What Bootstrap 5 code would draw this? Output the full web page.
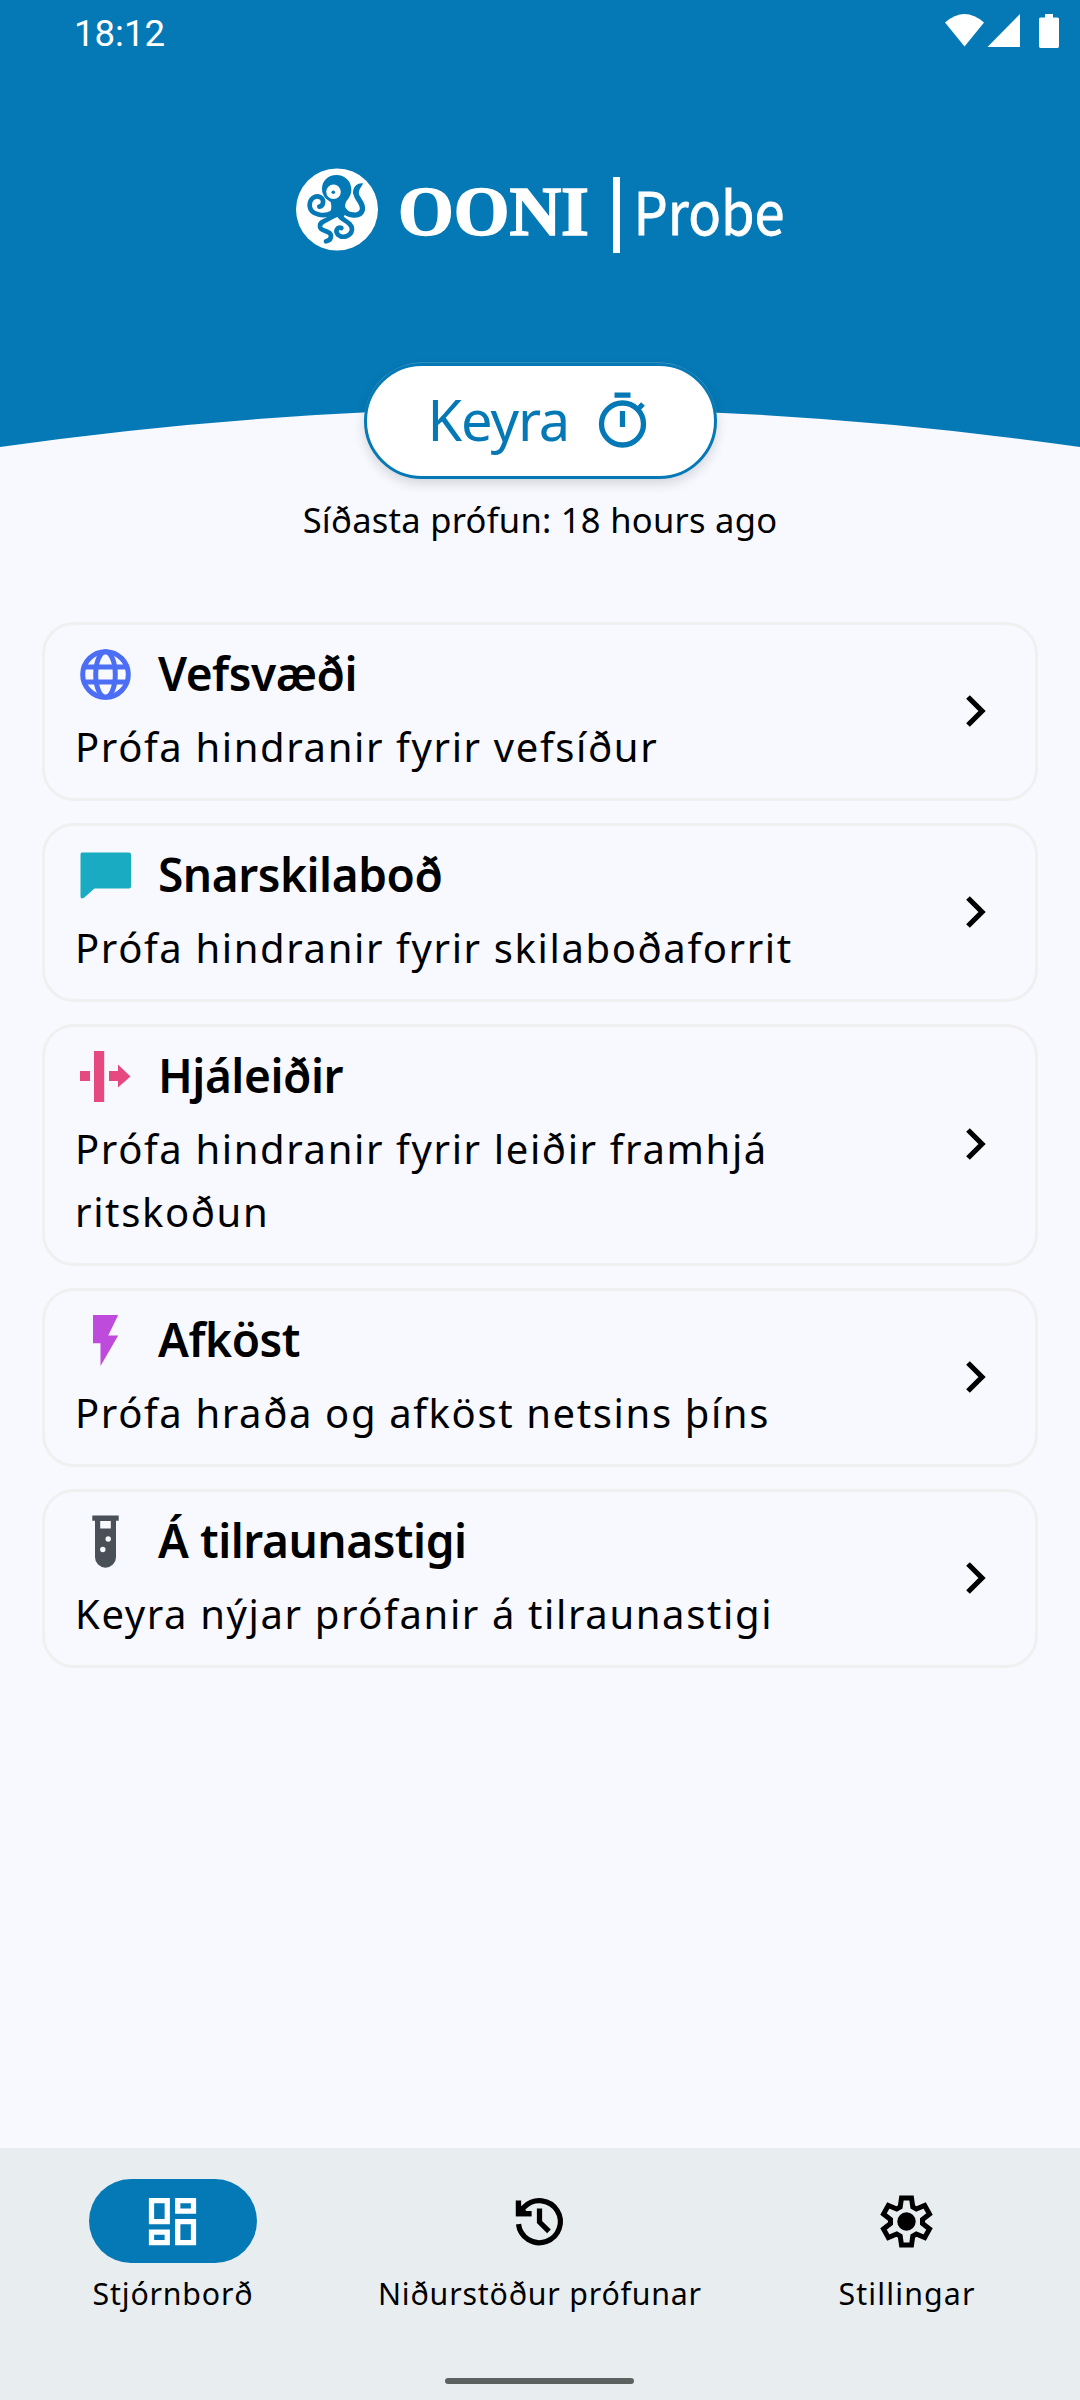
<!DOCTYPE html>
<html lang="is">
<head>
<meta charset="utf-8">
<meta name="viewport" content="width=device-width, initial-scale=1">
<title>OONI Probe</title>
<link href="https://cdn.jsdelivr.net/npm/bootstrap@5.3.0/dist/css/bootstrap.min.css" rel="stylesheet">
<style>
  :root { --ooni: #0579b6; --surface: #f8f9ff; }
  body { background: var(--surface); color: #000; font-family: "Noto Sans", "Open Sans", sans-serif; font-kerning: normal; }
  .screen { width: 1080px; height: 2400px; overflow: hidden; }
  .hero { height: 447px; position: relative; flex: none; }
  .hero-shape { position: absolute; inset: 0; z-index: 0; }
  .status-strip { height: 63px; padding: 4px 21px 0 74px; position: relative; }
  .status-icons { margin-top: 6px; }
  .clock { font: 36.6px/60px Roboto, sans-serif; color: #fff; }
  .brand-mark { margin-top: 86px; position: relative; }
  .run-wrap { margin-top: -84px; position: relative; }
  .run-btn { width: 353px; height: 116px; border: 3px solid var(--ooni); background: #fff; color: var(--ooni); border-radius: 58px; padding: 0 66px 3px 61px; font-size: 56px; line-height: 107px; letter-spacing: -1.1px; box-shadow: 0 -.5px 0 rgba(255,255,255,.35), 0 5px 12px rgba(0,0,0,.14); }
  .last-run { font-size: 34.5px; line-height: 50px; letter-spacing: .28px; margin-top: 16px; }
  .test-list { padding: 0 42px; gap: 22px; margin-top: 77px; }
  .test-card { --bs-card-bg: transparent; --bs-card-border-width: 3px; --bs-card-border-color: #f0f0f0; --bs-card-border-radius: 32px; padding: 18px 43px 20px 30px; }
  .test-title { font-size: 46px; font-weight: 600; line-height: 60px; letter-spacing: -.45px; margin: 0; padding-bottom: 3px; height: 63px; color: #000; }
  .test-head { gap: 21px; }
  .test-desc { font-size: 40px; line-height: 63px; letter-spacing: 1.62px; margin: 9px 0 0; color: #000; white-space: nowrap; }
  .bottom-bar { height: 252px; background: #e8eef0; padding-top: 31px; }
  .tab-row { gap: 21px; }
  .tab-item { color: #000; text-decoration: none; flex: 1 1 0; }
  .tab-pill { width: 168px; height: 84px; border-radius: 42px; padding-right: 2px; }
  .tab-pill.active { background: var(--ooni); color: #fff; }
  .tab-label { font-size: 30.3px; line-height: 42px; letter-spacing: .8px; margin-top: 10px; white-space: nowrap; }
  .tab-label.roomy { letter-spacing: 1.15px; }
  .home-bar { width: 189px; height: 6px; border-radius: 3px; background: #5d6160; margin: 63px 1px 0 0; }
</style>
<script src="https://cdn.jsdelivr.net/npm/bootstrap@5.3.0/dist/js/bootstrap.bundle.min.js"></script>
</head>
<body>
<div class="screen d-flex flex-column">
  <header class="hero">
    <svg class="hero-shape" width="1080" height="447" viewBox="0 0 1080 447"><path fill="#0579b6" d="M0 0H1080V447Q540 370 0 447Z"/></svg>
    <div class="status-strip d-flex justify-content-between align-items-start">
      <span class="clock">18:12</span>
      <svg class="status-icons" width="116" height="40" viewBox="943 10 116 40" fill="#fff">
        <path d="M945 22.500Q964.500 5.500 984 22.500L964.500 46.500Z"/>
        <path d="M1020 14V47H987.500Z"/>
        <path d="M1045 14h8v3.500h4.500q1.500 0 1.500 1.500v27q0 2-1.500 2h-17q-1.500 0-1.500-2v-27q0-1.500 1.500-1.500h4.500Z"/>
      </svg>
    </div>
    <div class="brand-mark d-flex justify-content-center">
      <svg width="530" height="110" viewBox="275 149 530 110">
        <circle cx="337" cy="209.500" r="41" fill="#fff"/>
        <g transform="translate(280 150) scale(.33333)" fill="none" stroke="#0579b6" stroke-width="14" stroke-linecap="round" stroke-linejoin="round">
          <path fill="#0579b6" stroke="none" d="M169 75C195 75 214 94 214 119C214 136 205 145 199 154C194 164 194 174 200 186L186 208L172 201L156 208L148 190C154 182 156 170 152 156C146 152 126 142 126 117C126 92 144 75 169 75Z"/>
          <path d="M156 188C134 202 92 196 89 168C88 146 106 134 122 142C134 150 130 168 118 170"/>
          <path stroke-width="16" d="M192 180C200 196 240 204 247 180C252 158 228 148 228 128"/>
          <path stroke="none" fill="#0579b6" d="M219 132C218 112 230 98 249 100C246 110 238 114 236 130Z"/>
          <path d="M162 196C148 212 118 210 120 230C122 246 150 240 153 256C154 268 146 272 138 274"/>
          <path d="M178 196C186 212 216 216 216 238C214 260 188 266 174 254C164 242 172 230 184 234"/>
        </g>
        <circle cx="333.500" cy="191.800" r="7.300" fill="#fff"/><circle cx="333.300" cy="192.200" r="1.800" fill="#0579b6"/>
        <text x="398" y="234.500" font-family="'Liberation Serif',serif" font-weight="700" font-size="69" fill="#fff" stroke="#fff" stroke-width="1.600" textLength="191" lengthAdjust="spacingAndGlyphs">OONI</text>
        <rect x="613" y="177" width="7" height="76" fill="#fff"/>
        <text x="633.500" y="235" font-family="'Noto Sans CJK SC','Noto Sans',sans-serif" font-size="59" fill="#fff" stroke="#fff" stroke-width=".8" textLength="151" lengthAdjust="spacingAndGlyphs">Probe</text>
      </svg>
    </div>
  </header>

  <div class="run-wrap d-flex flex-column align-items-center">
    <button type="button" class="run-btn d-flex align-items-center justify-content-between"><span>Keyra</span>
      <svg width="50" height="60" viewBox="598 390 50 60" fill="none" stroke="#0579b6" stroke-width="5.300"><circle cx="622.500" cy="424" r="21"/><path d="M614.500 395.200h16M622.500 411v16M638 409l5-5"/></svg>
    </button>
    <div class="last-run">Síðasta prófun: 18 hours ago</div>
  </div>

  <main class="test-list d-flex flex-column">
    <a class="card test-card flex-row align-items-center justify-content-between text-decoration-none" href="#">
      <div>
        <div class="test-head d-flex align-items-center">
          <svg width="62" height="63" viewBox="-30.500 -31.500 62 63" fill="none" stroke="#4c6ef5" stroke-width="5"><circle r="22.800"/><ellipse rx="9.800" ry="22.800"/><path d="M-21-7.500H21M-21 7.500H21"/></svg>
          <h2 class="test-title">Vefsvæði</h2>
        </div>
        <p class="test-desc">Prófa hindranir fyrir vefsíður</p>
      </div>
      <svg width="32" height="36" viewBox="-16 -18 32 36"><path d="M-8-14L6 0L-8 14" fill="none" stroke="#000" stroke-width="5.200"/></svg>
    </a>
    <a class="card test-card flex-row align-items-center justify-content-between text-decoration-none" href="#">
      <div>
        <div class="test-head d-flex align-items-center">
          <svg width="62" height="63" viewBox="-30.500 -31.500 62 63"><path fill="#18abc1" d="M-23.500-23h47q2 0 2 2v32q0 2-2 2h-34.500l-10.500 9.300q-3.500 2-3.500-1.500v-41.800q0-2 1.500-2Z"/></svg>
          <h2 class="test-title">Snarskilaboð</h2>
        </div>
        <p class="test-desc">Prófa hindranir fyrir skilaboðaforrit</p>
      </div>
      <svg width="32" height="36" viewBox="-16 -18 32 36"><path d="M-8-14L6 0L-8 14" fill="none" stroke="#000" stroke-width="5.200"/></svg>
    </a>
    <a class="card test-card flex-row align-items-center justify-content-between text-decoration-none" href="#">
      <div>
        <div class="test-head d-flex align-items-center">
          <svg width="62" height="63" viewBox="-30.500 -31.500 62 63" fill="#e64980"><path d="M-25.500-5.500h10v10h-10ZM-11.500-25.500h10.200v51h-10.200ZM3.500-5.500h9v-6.500L25 0 12.500 11v-6.500h-9Z"/></svg>
          <h2 class="test-title">Hjáleiðir</h2>
        </div>
        <p class="test-desc">Prófa hindranir fyrir leiðir framhjá<br>ritskoðun</p>
      </div>
      <svg width="32" height="36" viewBox="-16 -18 32 36"><path d="M-8-14L6 0L-8 14" fill="none" stroke="#000" stroke-width="5.200"/></svg>
    </a>
    <a class="card test-card flex-row align-items-center justify-content-between text-decoration-none" href="#">
      <div>
        <div class="test-head d-flex align-items-center">
          <svg width="62" height="63" viewBox="-30.500 -31.500 62 63"><path fill="#be4bdb" d="M-12.500-25.500h25.200l-10 20.500h10L-5 25.500v-22.700h-7.500Z"/></svg>
          <h2 class="test-title">Afköst</h2>
        </div>
        <p class="test-desc">Prófa hraða og afköst netsins þíns</p>
      </div>
      <svg width="32" height="36" viewBox="-16 -18 32 36"><path d="M-8-14L6 0L-8 14" fill="none" stroke="#000" stroke-width="5.200"/></svg>
    </a>
    <a class="card test-card flex-row align-items-center justify-content-between text-decoration-none" href="#">
      <div>
        <div class="test-head d-flex align-items-center">
          <svg width="62" height="63" viewBox="-30.500 -31.500 62 63"><path fill="#495057" d="M-13.200-26h26.400v5.200h-2.700v36.500a10.500 10.500 0 0 1-21 0v-36.500h-2.700Z"/><path fill="#f8f9ff" d="M-5.300-20.500h10.600v7.500h-10.600Z"/><circle cx="2.700" cy="-2.500" r="2.700" fill="#f8f9ff"/><circle cx="-2.700" cy="8" r="2.700" fill="#f8f9ff"/></svg>
          <h2 class="test-title">Á tilraunastigi</h2>
        </div>
        <p class="test-desc">Keyra nýjar prófanir á tilraunastigi</p>
      </div>
      <svg width="32" height="36" viewBox="-16 -18 32 36"><path d="M-8-14L6 0L-8 14" fill="none" stroke="#000" stroke-width="5.200"/></svg>
    </a>
  </main>

  <nav class="bottom-bar mt-auto d-flex flex-column align-items-center flex-shrink-0">
    <div class="tab-row d-flex w-100">
      <a class="tab-item d-flex flex-column align-items-center" href="#">
        <span class="tab-pill active d-flex align-items-center justify-content-center"><svg width="63" height="63" viewBox="0 0 24 24" fill="currentColor"><path d="M19 5v2h-4V5h4M9 5v6H5V5h4m10 8v6h-4v-6h4M9 17v2H5v-2h4M21 3h-8v6h8V3zM11 3H3v10h8V3zm10 8h-8v10h8V11zm-10 4H3v6h8v-6z"/></svg></span>
        <span class="tab-label">Stjórnborð</span>
      </a>
      <a class="tab-item d-flex flex-column align-items-center" href="#">
        <span class="tab-pill d-flex align-items-center justify-content-center"><svg width="63" height="63" viewBox="0 0 24 24" fill="none" stroke="#000" stroke-width="2"><path d="M4 13a8 8 0 1 0 2.350-6.650L4.500 8.200M4 4v5h5M12 7v5.200l3.600 3.600"/><path d="M3 4V10L9 10Z" fill="#000" stroke="none"/></svg></span>
        <span class="tab-label">Niðurstöður prófunar</span>
      </a>
      <a class="tab-item d-flex flex-column align-items-center" href="#">
        <span class="tab-pill d-flex align-items-center justify-content-center"><svg width="63" height="63" viewBox="-31.500 -31.500 63 63"><path fill="none" stroke="#000" stroke-width="5" d="M-5-23.500H5L6.300-14.500 9.800-12.500 18.200-16 23-7.500 16-2V2L23 7.500 18.200 16 9.800 12.500 6.300 14.500 5 23.500H-5L-6.300 14.500-9.800 12.500-18.200 16-23 7.500-16 2V-2L-23-7.500-18.200-16-9.800-12.500-6.300-14.500Z"/><circle r="9.200"/></svg></span>
        <span class="tab-label roomy">Stillingar</span>
      </a>
    </div>
    <div class="home-bar"></div>
  </nav>
</div>
</body>
</html>
